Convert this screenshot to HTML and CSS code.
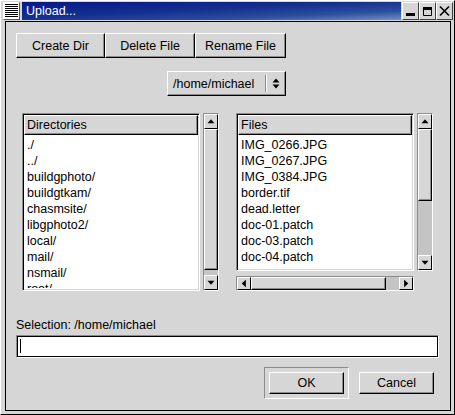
FILE: index.html
```html
<!DOCTYPE html>
<html>
<head>
<meta charset="utf-8">
<title>Upload...</title>
<link rel="stylesheet" href="styles.css">
</head>
<body>
<div class="window">
  <div class="titlebar">
    <div class="menu-btn">
      <svg width="15" height="16" viewBox="0 0 15 16"><g fill="#000"><rect x="1" y="1" width="13" height="1"/><rect x="1" y="3" width="13" height="1"/><rect x="1" y="5" width="13" height="1"/><rect x="1" y="7" width="13" height="1"/><rect x="1" y="9" width="13" height="1"/><rect x="1" y="11" width="13" height="1"/><rect x="1" y="13" width="13" height="1"/></g></svg>
    </div>
    <div class="title">Upload...</div>
    <div class="wm-btn">
      <svg width="15" height="16" viewBox="0 0 15 16"><rect x="3" y="10" width="9" height="3" fill="#000"/></svg>
    </div>
    <div class="wm-btn">
      <svg width="15" height="16" viewBox="0 0 15 16"><path d="M3.5 4.5h8v8h-8z" fill="none" stroke="#000"/><rect x="3" y="4" width="9" height="3" fill="#000"/></svg>
    </div>
    <div class="wm-btn">
      <svg width="15" height="16" viewBox="0 0 15 16"><path d="M3 3.5l9 9M12 3.5l-9 9" stroke="#000" stroke-width="1.6" fill="none"/></svg>
    </div>
  </div>
  <div class="client">
    <div class="top-area">
      <div class="btn-row">
        <div class="btn w89">Create Dir</div>
        <div class="btn w90">Delete File</div>
        <div class="btn w91">Rename File</div>
      </div>
      <div class="combo-row">
        <div class="combo">
          <span class="combo-text">/home/michael</span>
          <span class="combo-sep"></span>
          <svg class="combo-arrows" width="8" height="13" viewBox="0 0 8 13"><path d="M0.5 5.5L4 1.5L7.5 5.5Z M0.5 7.5L4 11.5L7.5 7.5Z" fill="#000"/></svg>
        </div>
      </div>
    </div>

    <div class="lists">
      <div class="pane">
        <div class="list dir-list">
          <div class="list-head">Directories</div>
          <div class="rows">
            <div class="row">./</div>
            <div class="row">../</div>
            <div class="row">buildgphoto/</div>
            <div class="row">buildgtkam/</div>
            <div class="row">chasmsite/</div>
            <div class="row">libgphoto2/</div>
            <div class="row">local/</div>
            <div class="row">mail/</div>
            <div class="row">nsmail/</div>
            <div class="row">root/</div>
          </div>
        </div>
        <div class="vscroll dir-scroll">
          <div class="arrow-btn"><svg width="14" height="13" viewBox="0 0 14 13"><path d="M3 8.5L7 4L11 8.5Z" fill="#000"/></svg></div>
          <div class="slider dir-slider"></div>
          <div class="trough-fill"></div>
          <div class="arrow-btn"><svg width="14" height="13" viewBox="0 0 14 13"><path d="M3 4.5L7 9L11 4.5Z" fill="#000"/></svg></div>
        </div>
      </div>

      <div class="pane file-pane">
        <div class="file-col">
          <div class="list file-list">
            <div class="list-head">Files</div>
            <div class="rows">
              <div class="row">IMG_0266.JPG</div>
              <div class="row">IMG_0267.JPG</div>
              <div class="row">IMG_0384.JPG</div>
              <div class="row">border.tif</div>
              <div class="row">dead.letter</div>
              <div class="row">doc-01.patch</div>
              <div class="row">doc-03.patch</div>
              <div class="row">doc-04.patch</div>
              <div class="row">doc-04.txt</div>
            </div>
          </div>
          <div class="hscroll">
            <div class="arrow-btn h"><svg width="13" height="13" viewBox="0 0 13 13"><path d="M8.5 2.5L4 6.5L8.5 10.5Z" fill="#000"/></svg></div>
            <div class="slider h-slider"></div>
            <div class="trough-fill"></div>
            <div class="arrow-btn h"><svg width="13" height="13" viewBox="0 0 13 13"><path d="M4.5 2.5L9 6.5L4.5 10.5Z" fill="#000"/></svg></div>
          </div>
        </div>
        <div class="vscroll file-scroll">
          <div class="arrow-btn"><svg width="14" height="13" viewBox="0 0 14 13"><path d="M3 8.5L7 4L11 8.5Z" fill="#000"/></svg></div>
          <div class="slider file-slider"></div>
          <div class="trough-fill"></div>
          <div class="arrow-btn"><svg width="14" height="13" viewBox="0 0 14 13"><path d="M3 4.5L7 9L11 4.5Z" fill="#000"/></svg></div>
        </div>
      </div>
    </div>

    <div class="selection">Selection: /home/michael</div>
    <div class="entry"><span class="cursor"></span></div>

    <div class="actions">
      <div class="default-frame"><div class="btn action">OK</div></div>
      <div class="btn action cancel">Cancel</div>
    </div>
  </div>
</div>
</body>
</html>
```

FILE: styles.css
```css
* { box-sizing: border-box; }
html, body { margin: 0; padding: 0; }
body {
  background: #d6d6d6;
  font-family: "Liberation Sans", Arial, sans-serif;
  font-size: 12.5px;
  color: #000;
  width: 455px;
  height: 415px;
  overflow: hidden;
}
.window {
  width: 455px;
  height: 415px;
  background: #d6d6d6;
  border: 1px solid;
  border-color: #fff #000 #000 #fff;
  padding: 1px 3px 3px 4px;
}

/* title bar */
.titlebar {
  display: flex;
  height: 18px;
  margin: 0 -2px 1px -2px;
}
.menu-btn {
  width: 17px;
  height: 18px;
  margin-right: 2px;
  background: #fff;
  border: 1px solid;
  border-color: #fff #555 #555 #fff;
  display: flex;
  align-items: center;
  justify-content: center;
}
.title {
  flex: 1;
  background: linear-gradient(to bottom right, #06178a 0%, #14308f 45%, #2e4f9e 75%, #6f90c2 100%);
  color: #fff;
  font-size: 12.5px;
  line-height: 18px;
  padding-left: 4px;
  margin-right: 1px;
}
.wm-btn {
  width: 17px;
  height: 18px;
  background: #d6d6d6;
  border: 1px solid;
  border-color: #fff #404040 #404040 #fff;
  display: flex;
  align-items: center;
  justify-content: center;
}

/* client */
.client {
  height: 390px;
  border: 1px solid #000;
  padding: 11px 0 0 10px;
  display: flex;
  flex-direction: column;
}
.top-area { width: 270px; }
.btn-row { display: flex; }
.btn {
  height: 25px;
  background: #d6d6d6;
  border: 1px solid;
  border-color: #fff #000 #000 #fff;
  box-shadow: inset -1px -1px 0 #8c8c8c;
  display: flex;
  align-items: center;
  justify-content: center;
  white-space: nowrap;
}
.w89 { width: 89px; }
.w90 { width: 90px; }
.w91 { width: 91px; }

.combo-row {
  display: flex;
  justify-content: flex-end;
  margin-top: 13px;
}
.combo {
  width: 119px;
  height: 25px;
  border: 1px solid;
  border-color: #fff #000 #000 #fff;
  box-shadow: inset -1px -1px 0 #8c8c8c;
  display: flex;
  align-items: center;
  padding-left: 5px;
}
.combo-text { flex: 1; }
.combo-sep {
  width: 2px;
  height: 17px;
  border-left: 1px solid #8c8c8c;
  border-right: 1px solid #fff;
  margin-right: 5px;
}
.combo-arrows { margin-right: 5px; }

/* lists */
.lists {
  display: flex;
  margin-top: 17px;
  padding-left: 6px;
}
.pane { display: flex; align-items: flex-start; }
.file-pane { margin-left: 17px; }
.list {
  width: 178px;
  background: #fff;
  border: 1px solid;
  border-color: #8c8c8c #fff #fff #8c8c8c;
  box-shadow: inset 1px 1px 0 #000, inset -1px -1px 0 #d6d6d6;
  padding: 1px;
  overflow: hidden;
  display: flex;
  flex-direction: column;
}
.dir-list { height: 178px; }
.file-list { height: 158px; }
.list-head {
  flex: none;
  height: 20px;
  line-height: 18px;
  background: #d6d6d6;
  border: 1px solid;
  border-color: #fff #000 #000 #fff;
  box-shadow: inset -1px -1px 0 #8c8c8c;
  padding-left: 2px;
}
.rows {
  flex: 1;
  overflow: hidden;
  padding: 0 0 0 3px;
  margin-right: 1px;
  margin-bottom: 1px;
}
.row {
  height: 16px;
  line-height: 16px;
  white-space: nowrap;
}
.row:first-child { margin-top: 2px; }

.vscroll {
  width: 16px;
  margin-left: 3px;
  background: #c4c4c4;
  border: 1px solid;
  border-color: #8c8c8c #fff #fff #8c8c8c;
  display: flex;
  flex-direction: column;
}
.dir-scroll { height: 178px; }
.file-scroll { height: 158px; }
.arrow-btn {
  flex: none;
  height: 15px;
  background: #d6d6d6;
  border: 1px solid;
  border-color: #fff #000 #000 #fff;
  display: flex;
  align-items: center;
  justify-content: center;
  overflow: hidden;
}
.slider {
  flex: none;
  background: #d6d6d6;
  border: 1px solid;
  border-color: #fff #000 #000 #fff;
  box-shadow: inset -1px -1px 0 #8c8c8c;
}
.trough-fill { flex: 1; }
.dir-slider { height: 141px; }
.file-slider { height: 72px; }

.file-col { display: flex; flex-direction: column; }
.hscroll {
  margin-top: 5px;
  width: 178px;
  height: 15px;
  background: #c4c4c4;
  border: 1px solid;
  border-color: #8c8c8c #fff #fff #8c8c8c;
  display: flex;
}
.arrow-btn.h { width: 14px; height: 13px; }
.h-slider { width: 135px; }

/* selection */
.selection {
  margin-top: 26px;
  height: 16px;
  line-height: 16px;
}
.entry {
  margin: 2px 11px 0 0;
  height: 23px;
  background: #fff;
  border: 1px solid;
  border-color: #8c8c8c #fff #fff #8c8c8c;
  box-shadow: inset 0 0 0 1px #000;
  padding: 3px 0 0 3px;
}
.cursor {
  display: block;
  width: 1px;
  height: 14px;
  background: #000;
}

.actions {
  display: flex;
  justify-content: flex-end;
  align-items: flex-start;
  margin-top: 9px;
  padding-right: 16px;
}
.default-frame {
  width: 85px;
  height: 32px;
  border: 1px solid;
  border-color: #8c8c8c #fff #fff #8c8c8c;
  padding: 4px;
}
.btn.action { width: 75px; height: 22px; }
.default-frame .btn.action { width: 100%; }
.cancel { margin-left: 10px; margin-top: 5px; }
```
